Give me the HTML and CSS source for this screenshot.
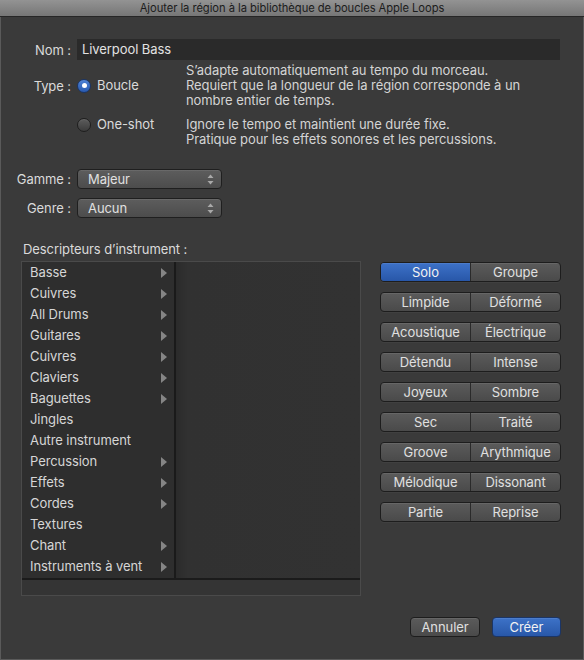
FILE: index.html
```html
<!DOCTYPE html>
<html lang="fr">
<head>
<meta charset="utf-8">
<title>Apple Loops</title>
<link rel="stylesheet" href="styles.css">
</head>
<body>
<div class="window">
  <div class="titlebar">Ajouter la région à la bibliothèque de boucles Apple Loops</div>
  <div class="content">
    <div class="row row-nom">
      <div class="label">Nom :</div>
      <div class="field">Liverpool Bass</div>
    </div>
    <div class="row row-boucle">
      <div class="label">Type :</div>
      <div class="opt"><span class="radio on"></span><span>Boucle</span></div>
      <div class="desc">S’adapte automatiquement au tempo du morceau.<br>Requiert que la longueur de la région corresponde à un<br>nombre entier de temps.</div>
    </div>
    <div class="row row-oneshot">
      <div class="label"></div>
      <div class="opt"><span class="radio"></span><span>One-shot</span></div>
      <div class="desc">Ignore le tempo et maintient une durée fixe.<br>Pratique pour les effets sonores et les percussions.</div>
    </div>
    <div class="row row-gamme">
      <div class="label">Gamme :</div>
      <div class="popup"><span>Majeur</span>
        <svg class="updown" width="7" height="11" viewBox="0 0 7 11"><path d="M3.5 0.5 L6.5 4 L0.5 4 Z M0.5 7 L6.5 7 L3.5 10.5 Z" fill="#a9a9a9"/></svg>
      </div>
    </div>
    <div class="row row-genre">
      <div class="label">Genre :</div>
      <div class="popup"><span>Aucun</span>
        <svg class="updown" width="7" height="11" viewBox="0 0 7 11"><path d="M3.5 0.5 L6.5 4 L0.5 4 Z M0.5 7 L6.5 7 L3.5 10.5 Z" fill="#a9a9a9"/></svg>
      </div>
    </div>

    <div class="desc-label">Descripteurs d’instrument :</div>
    <div class="lower">
      <div class="listbox">
        <div class="columns">
          <ul class="col-left">
            <li>Basse<i class="arrow"></i></li>
            <li>Cuivres<i class="arrow"></i></li>
            <li>All Drums<i class="arrow"></i></li>
            <li>Guitares<i class="arrow"></i></li>
            <li>Cuivres<i class="arrow"></i></li>
            <li>Claviers<i class="arrow"></i></li>
            <li>Baguettes<i class="arrow"></i></li>
            <li>Jingles</li>
            <li>Autre instrument</li>
            <li>Percussion<i class="arrow"></i></li>
            <li>Effets<i class="arrow"></i></li>
            <li>Cordes<i class="arrow"></i></li>
            <li>Textures</li>
            <li>Chant<i class="arrow"></i></li>
            <li>Instruments à vent<i class="arrow"></i></li>
          </ul>
          <div class="col-right"></div>
        </div>
        <div class="list-footer"></div>
      </div>
      <div class="segments">
        <div class="seg"><span class="sel">Solo</span><span>Groupe</span></div>
        <div class="seg"><span>Limpide</span><span>Déformé</span></div>
        <div class="seg"><span>Acoustique</span><span>Électrique</span></div>
        <div class="seg"><span>Détendu</span><span>Intense</span></div>
        <div class="seg"><span>Joyeux</span><span>Sombre</span></div>
        <div class="seg"><span>Sec</span><span>Traité</span></div>
        <div class="seg"><span>Groove</span><span>Arythmique</span></div>
        <div class="seg"><span>Mélodique</span><span>Dissonant</span></div>
        <div class="seg"><span>Partie</span><span>Reprise</span></div>
      </div>
    </div>

    <div class="footer">
      <div class="btn">Annuler</div>
      <div class="btn btn-primary">Créer</div>
    </div>
  </div>
</div>
</body>
</html>
```

FILE: styles.css
```css
* { box-sizing: border-box; }
html, body { margin: 0; padding: 0; }
body {
  width: 584px;
  height: 660px;
  overflow: hidden;
  background: #3a3a3a;
  font-family: Inter, "Liberation Sans", sans-serif;
  font-size: 13px;
  letter-spacing: -0.08px;
  color: #dadada;
}
.window {
  width: 584px;
  height: 660px;
  background: #3a3a3a;
  border-left: 1px solid #5a5a5a;
  border-right: 1px solid #5a5a5a;
  border-bottom: 1px solid #5a5a5a;
  display: flex;
  flex-direction: column;
}
.titlebar {
  height: 17px;
  line-height: 16px;
  background: linear-gradient(#939393, #767676);
  border-bottom: 1px solid #262626;
  color: #1c1c1c;
  font-size: 11.2px;
  text-align: center;
  letter-spacing: -0.05px;
  margin: 0 -1px;
}
.content {
  padding: 22px 0 0 0;
  display: flex;
  flex-direction: column;
}
.row {
  display: flex;
  align-items: center;
  gap: 6px;
}
.label {
  width: 70px;
  flex: none;
  text-align: right;
  white-space: nowrap;
}
.row-nom .field {
  width: 483px;
  height: 21px;
  line-height: 21px;
  background: #2a2a2a;
  padding-left: 5px;
  color: #e2e2e2;
}
.row-boucle { margin-top: 3px; }
.row-oneshot { margin-top: 9px; align-items: flex-start; }
.opt {
  width: 103px;
  flex: none;
  display: flex;
  align-items: center;
  gap: 6px;
  line-height: 15px;
}
.desc {
  line-height: 15px;
  color: #d4d4d4;
}
.radio {
  width: 14px;
  height: 14px;
  border-radius: 50%;
  background: linear-gradient(#5c5c5c, #3c3c3c);
  border: 1px solid #1e1e1e;
  box-shadow: inset 0 1px 0 rgba(255,255,255,0.08);
  flex: none;
  position: relative;
}
.radio.on {
  background: linear-gradient(#4c80d4, #2a5bb0);
  border-color: #1b3566;
}
.radio.on::after {
  content: "";
  position: absolute;
  left: 3.5px;
  top: 3.5px;
  width: 5px;
  height: 5px;
  border-radius: 50%;
  background: #fff;
}
.row-gamme { margin-top: 22px; }
.row-genre { margin-top: 9px; }
.popup {
  width: 145px;
  height: 20px;
  border-radius: 4px;
  border: 1px solid #1f1f1f;
  background: linear-gradient(#5d5d5d, #4c4c4c);
  box-shadow: inset 0 1px 0 rgba(255,255,255,0.08);
  display: flex;
  align-items: center;
  justify-content: space-between;
  padding: 0 7px 0 10px;
  color: #e0e0e0;
}
.updown { display: block; }
.desc-label {
  margin-top: 23px;
  margin-left: 22px;
  line-height: 16px;
}
.lower {
  margin-top: 4px;
  margin-left: 20px;
  display: flex;
  gap: 19px;
  align-items: flex-start;
}
.listbox {
  width: 340px;
  height: 335px;
  border: 1px solid #4a4a4a;
  background: #303030;
  display: flex;
  flex-direction: column;
}
.columns {
  display: flex;
  height: 318px;
  border-bottom: 2px solid #1b1b1b;
}
.col-left {
  list-style: none;
  margin: 0;
  padding: 0;
  width: 154px;
  background: #2e2e2e;
  border-right: 2px solid #1a1a1a;
  flex: none;
}
.col-left li {
  height: 21px;
  line-height: 21px;
  padding-left: 8px;
  padding-right: 7px;
  display: flex;
  align-items: center;
  justify-content: space-between;
  color: #d6d6d6;
  white-space: nowrap;
}
.arrow {
  width: 0;
  height: 0;
  border-top: 5px solid transparent;
  border-bottom: 5px solid transparent;
  border-left: 6px solid #858585;
}
.col-right {
  flex: 1;
  background: linear-gradient(90deg, #2b2b2b, #313131 12px, #323232);
}
.list-footer {
  flex: 1;
  background: #343434;
}
.segments {
  width: 181px;
  margin-top: 1px;
  display: flex;
  flex-direction: column;
  gap: 10px;
}
.seg {
  height: 20px;
  display: flex;
  border: 1px solid #1d1d1d;
  border-radius: 4px;
  overflow: hidden;
  background: linear-gradient(#5b5b5b, #4a4a4a);
  box-shadow: 0 1px 0 rgba(255,255,255,0.03);
}
.seg span {
  flex: 1;
  text-align: center;
  line-height: 18px;
  color: #e0e0e0;
  box-shadow: inset 0 1px 0 rgba(255,255,255,0.08);
}
.seg span + span { border-left: 1px solid #2a2a2a; }
.seg span.sel {
  background: linear-gradient(#3d72c8, #2857a8);
  color: #f2f2f2;
}
.footer {
  margin-top: 21px;
  margin-right: 22px;
  display: flex;
  justify-content: flex-end;
  gap: 12px;
}
.btn {
  width: 70px;
  height: 20px;
  line-height: 18px;
  text-align: center;
  border: 1px solid #1d1d1d;
  border-radius: 4px;
  background: linear-gradient(#5b5b5b, #4a4a4a);
  box-shadow: inset 0 1px 0 rgba(255,255,255,0.08);
  color: #e0e0e0;
}
.btn-primary {
  width: 69px;
  background: linear-gradient(#3d72c8, #2857a8);
  border-color: #1b3566;
  color: #f2f2f2;
}
```
